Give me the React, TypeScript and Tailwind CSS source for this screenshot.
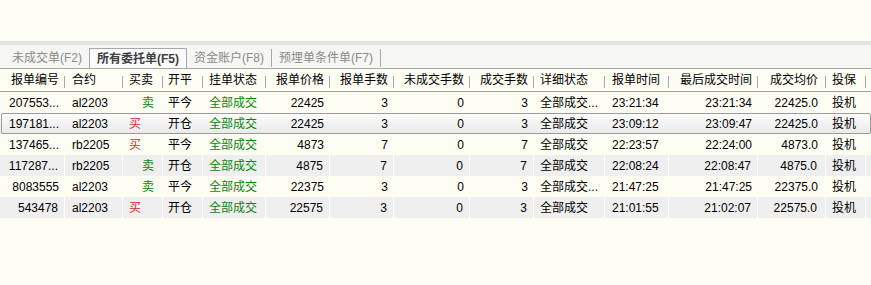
import React from "react";

type Col = {
  title: string;
  w: string;
  align: "l" | "r";
  pad: string;
};

const cols: Col[] = [
  { title: "报单编号", w: "w-[65px]", align: "r", pad: "pr-[6px]" },
  { title: "合约", w: "w-[58px]", align: "l", pad: "pl-[7px]" },
  { title: "买卖", w: "w-[40px]", align: "l", pad: "pl-[6px]" },
  { title: "开平", w: "w-[40px]", align: "l", pad: "pl-[5px]" },
  { title: "挂单状态", w: "w-[63px]", align: "l", pad: "pl-[6px]" },
  { title: "报单价格", w: "w-[64px]", align: "r", pad: "pr-[6px]" },
  { title: "报单手数", w: "w-[64px]", align: "r", pad: "pr-[6px]" },
  { title: "未成交手数", w: "w-[76px]", align: "r", pad: "pr-[6px]" },
  { title: "成交手数", w: "w-[64px]", align: "r", pad: "pr-[6px]" },
  { title: "详细状态", w: "w-[71px]", align: "l", pad: "pl-[6px]" },
  { title: "报单时间", w: "w-[64px]", align: "l", pad: "pl-[7px]" },
  { title: "最后成交时间", w: "w-[89px]", align: "r", pad: "pr-[6px]" },
  { title: "成交均价", w: "w-[68px]", align: "r", pad: "pr-[8px]" },
  { title: "投保", w: "w-[40px]", align: "l", pad: "pl-[6px]" },
];

interface Order {
  id: string;
  symbol: string;
  side: "买" | "卖";
  offset: string;
  status: string;
  price: string;
  qty: string;
  left: string;
  filled: string;
  detail: string;
  time: string;
  lastTime: string;
  avg: string;
  hedge: string;
}

const orders: Order[] = [
  { id: "207553...", symbol: "al2203", side: "卖", offset: "平今", status: "全部成交", price: "22425", qty: "3", left: "0", filled: "3", detail: "全部成交...", time: "23:21:34", lastTime: "23:21:34", avg: "22425.0", hedge: "投机" },
  { id: "197181...", symbol: "al2203", side: "买", offset: "开仓", status: "全部成交", price: "22425", qty: "3", left: "0", filled: "3", detail: "全部成交", time: "23:09:12", lastTime: "23:09:47", avg: "22425.0", hedge: "投机" },
  { id: "137465...", symbol: "rb2205", side: "买", offset: "平今", status: "全部成交", price: "4873", qty: "7", left: "0", filled: "7", detail: "全部成交", time: "22:23:57", lastTime: "22:24:00", avg: "4873.0", hedge: "投机" },
  { id: "117287...", symbol: "rb2205", side: "卖", offset: "开仓", status: "全部成交", price: "4875", qty: "7", left: "0", filled: "7", detail: "全部成交", time: "22:08:24", lastTime: "22:08:47", avg: "4875.0", hedge: "投机" },
  { id: "8083555", symbol: "al2203", side: "卖", offset: "平今", status: "全部成交", price: "22375", qty: "3", left: "0", filled: "3", detail: "全部成交...", time: "21:47:25", lastTime: "21:47:25", avg: "22375.0", hedge: "投机" },
  { id: "543478", symbol: "al2203", side: "买", offset: "开仓", status: "全部成交", price: "22575", qty: "3", left: "0", filled: "3", detail: "全部成交", time: "21:01:55", lastTime: "21:02:07", avg: "22575.0", hedge: "投机" },
];

const SELECTED = 1;

const App: React.FC = () => {
  return (
    <div
      className="w-[871px] h-[285px] overflow-hidden bg-[#fdfdf4] text-[12px] leading-none text-black"
      style={{ fontFamily: '"Liberation Sans", "Noto Sans CJK SC", sans-serif' }}
    >
      <div className="h-[41px]" />
      <div className="h-[4px] bg-[#e3e3e3]" />

      {/* tabs */}
      <div className="h-[24px] flex items-end bg-[#f6f6f2] border-b border-[#a8a8a8]">
        <div className="h-[20px] flex items-center pl-[12px] pr-[7px] text-[#8a8a8a]">
          未成交单(F2)
        </div>
        <div className="h-[20px] flex items-center px-[7px] bg-[#fbfbfb] border border-b-0 border-[#a8a8a8] text-[#404040] font-bold">
          所有委托单(F5)
        </div>
        <div className="h-[18px] flex items-center px-[7px] text-[#8a8a8a] border-r border-[#a8a8a8] mb-[1px]">
          资金账户(F8)
        </div>
        <div className="h-[18px] flex items-center px-[7px] text-[#8a8a8a] border-r border-[#a8a8a8] mb-[1px]">
          预埋单条件单(F7)
        </div>
      </div>

      {/* header */}
      <div className="h-[23px] flex border-b border-[#a0a0a0]">
        {cols.map((c) => (
          <div key={c.title} className={`${c.w} shrink-0 relative flex items-center ${c.align === "r" ? "justify-end" : "justify-start"} ${c.pad}`}>
            {c.title}
            <span className="absolute right-0 top-[7px] h-[12px] w-px bg-[#a8a8a8]" />
          </div>
        ))}
        <div className="flex-1" />
      </div>

      {/* rows */}
      {orders.map((o, i) => {
        const gray = i === 3 || i === 5;
        const sel = i === SELECTED;
        const values: React.ReactNode[] = [
          o.id,
          o.symbol,
          <span className={o.side === "买" ? "text-[#d42a2a]" : "text-[#0a860a] pl-[13px]"}>{o.side}</span>,
          o.offset,
          <span className="text-[#0a860a]">{o.status}</span>,
          o.price,
          o.qty,
          o.left,
          o.filled,
          o.detail,
          o.time,
          o.lastTime,
          o.avg,
          o.hedge,
        ];
        return (
          <div
            key={o.id}
            className={`relative h-[21px] flex ${sel ? "bg-gradient-to-b from-[#fdfdfd] to-[#e9e9e9]" : ""}`}
          >
            {sel && (
              <span className="absolute inset-y-0 left-[1px] right-0 border border-[#9c9c9c] rounded-[2px] pointer-events-none" />
            )}
            {cols.map((c, j) => (
              <div
                key={c.title}
                className={`${c.w} shrink-0 flex items-center whitespace-nowrap overflow-hidden ${c.align === "r" ? "justify-end" : "justify-start"} ${c.pad} ${gray ? "bg-[#efefef] border-r border-white" : ""}`}
              >
                {values[j]}
              </div>
            ))}
            <div className={`flex-1 ${gray ? "bg-[#efefef]" : ""}`} />
          </div>
        );
      })}
    </div>
  );
};

export default App;
